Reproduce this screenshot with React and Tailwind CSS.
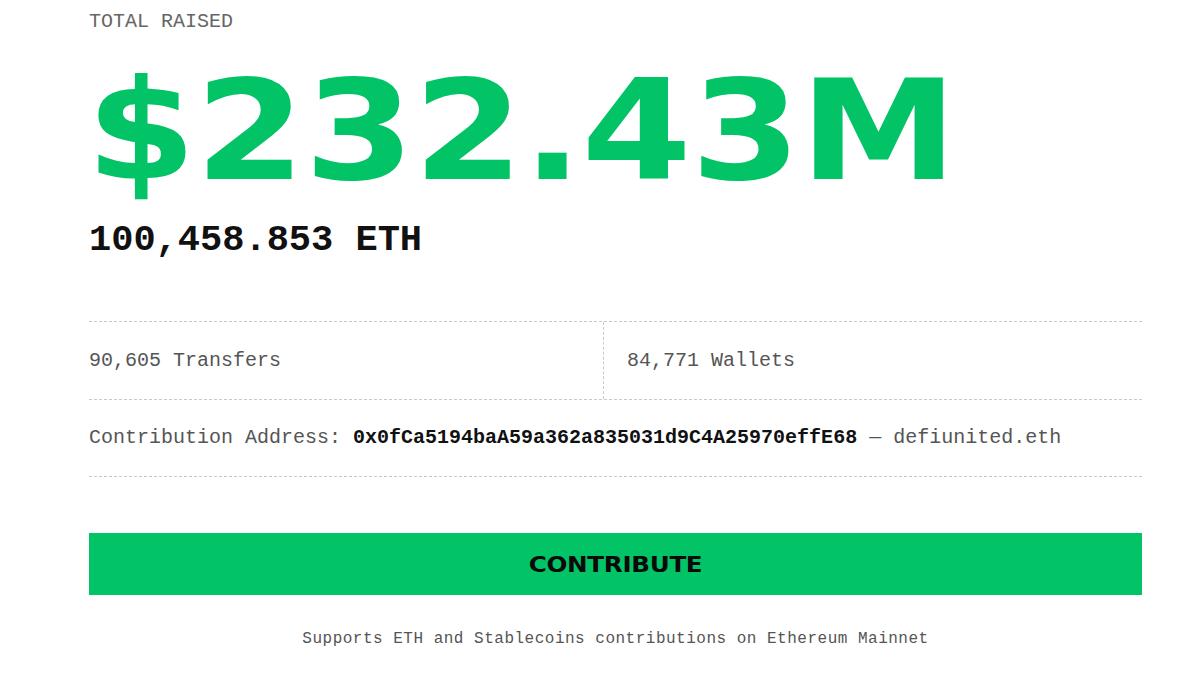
import React from 'react';

const mono = { fontFamily: '"Liberation Mono", "DejaVu Sans Mono", monospace' };
const display = { fontFamily: '"DejaVu Sans", "Liberation Sans", sans-serif' };

const App = () => {
  return (
    <div className="min-h-[695px] w-full overflow-hidden bg-white pl-[89px] pr-[58px]" style={mono}>
      <div className="pt-[8px] text-[20px] leading-[28px] text-[#666]">TOTAL RAISED</div>

      <div className="mt-[26px] h-[138px] -translate-x-[3px]">
        <div
          className="w-fit origin-left scale-x-[1.14] whitespace-nowrap text-[139px] font-bold leading-[138px] tracking-[-1px] text-[#02c467]"
          style={display}
        >
          $232.43M
        </div>
      </div>

      <div className="mt-[20px] text-[37px] font-bold leading-[40px] text-[#111]">100,458.853 ETH</div>

      <div className="mt-[61px] flex h-[79px] border-y border-dashed border-[#c9c9c9]">
        <div className="flex w-[515px] items-center border-r border-dashed border-[#c9c9c9] text-[20px] text-[#555]">
          90,605 Transfers
        </div>
        <div className="flex flex-1 items-center pl-[23px] text-[20px] text-[#555]">84,771 Wallets</div>
      </div>

      <div className="flex h-[77px] items-center border-b border-dashed border-[#c9c9c9] text-[20px] text-[#555]">
        <span>Contribution Address:&nbsp;</span>
        <span className="font-bold text-[#111]">0x0fCa5194baA59a362a835031d9C4A25970effE68</span>
        <span>&nbsp;— defiunited.eth</span>
      </div>

      <button className="mt-[56px] flex h-[62px] w-full items-center justify-center bg-[#02c467]">
        <span className="scale-x-[1.12] text-[22px] font-bold tracking-[-0.3px] text-[#0a0a0a]" style={display}>
          CONTRIBUTE
        </span>
      </button>

      <p className="mt-[32px] text-center text-[16px] leading-[24px] tracking-[0.5px] text-[#555]">
        Supports ETH and Stablecoins contributions on Ethereum Mainnet
      </p>
    </div>
  );
};

export default App;
